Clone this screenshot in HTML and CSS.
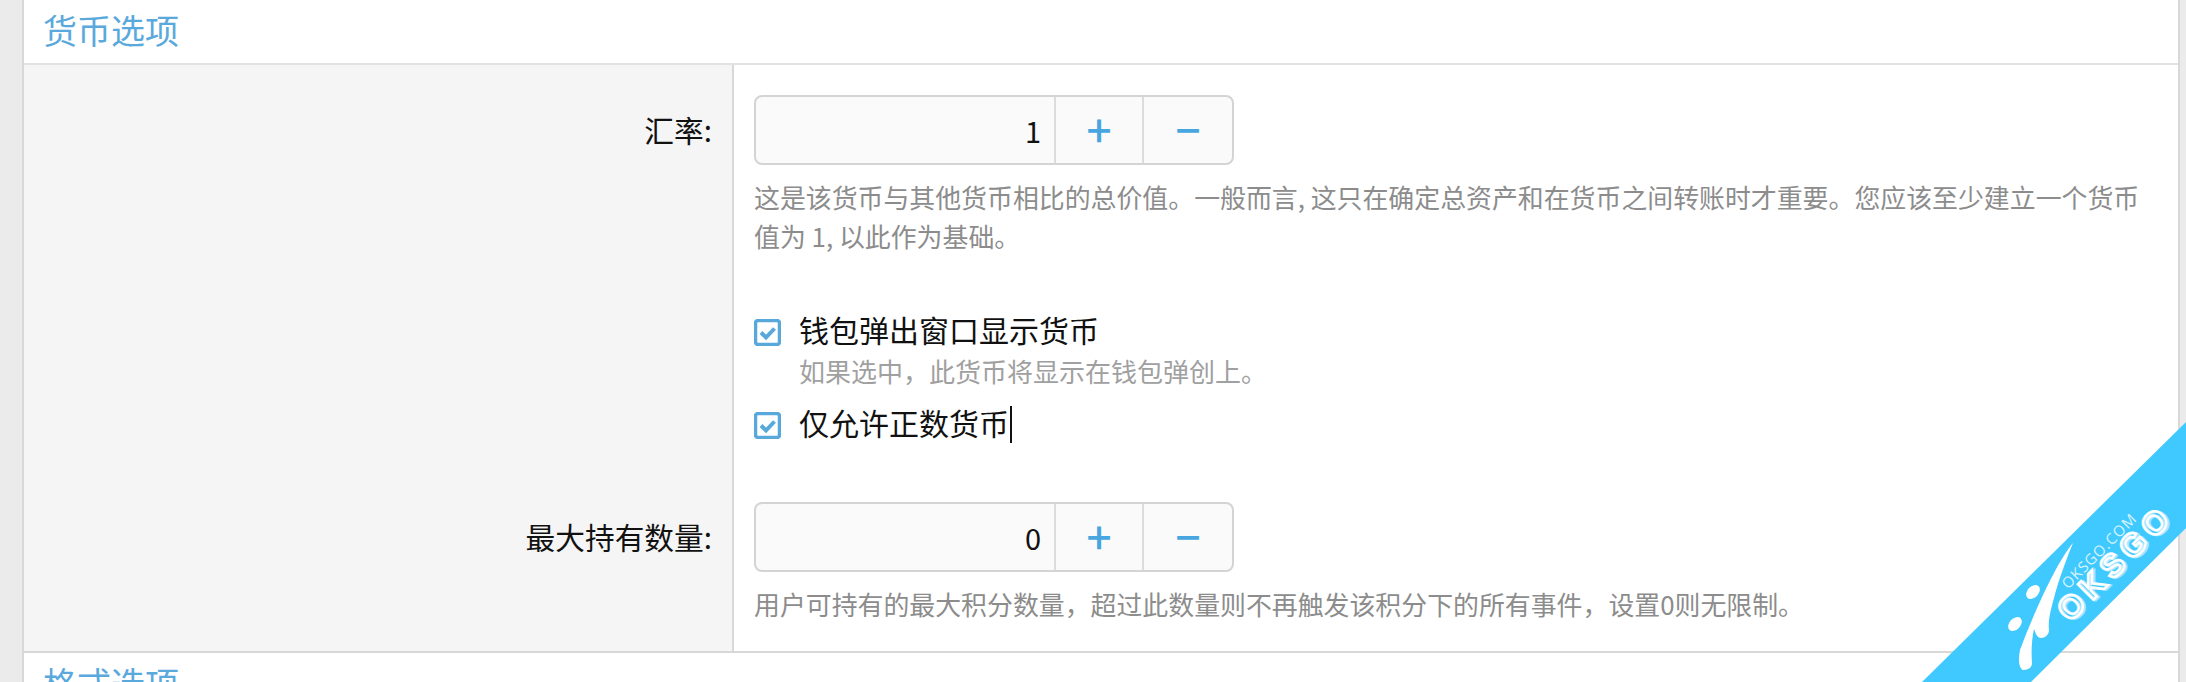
FILE: index.html
```html
<!DOCTYPE html>
<html lang="zh-CN">

<head>
    <meta charset="UTF-8">
    <title>货币选项</title>
    <link rel="stylesheet" href="styles.css">
</head>

<body>

    <div class="container">
        <h2 class="section-title">货币选项</h2>

        <div class="field">
            <label class="field-label" for="rate">汇率:</label>
            <div class="field-body">
                <div class="spinner">
                    <input id="rate" type="text" value="1">
                    <button type="button" class="plus">+</button>
                    <button type="button" class="minus">−</button>
                </div>
                <p class="help">这是该货币与其他货币相比的总价值。一般而言, 这只在确定总资产和在货币之间转账时才重要。您应该至少建立一个货币值为 1, 以此作为基础。</p>
            </div>
        </div>

        <div class="field">
            <div class="field-label"></div>
            <div class="field-body checks">
                <div class="check">
                    <svg class="check-box" viewBox="0 0 27 27">
                        <rect x="1.500" y="1.500" width="24" height="24" rx="2.500" fill="#fff" stroke="#58a8dc" stroke-width="3.500" />
                        <path d="M7 13.500l5 5 8.500-9" fill="none" stroke="#58a8dc" stroke-width="4" />
                    </svg>
                    <div>
                        <div class="check-text">钱包弹出窗口显示货币</div>
                        <div class="check-help">如果选中，此货币将显示在钱包弹创上。</div>
                    </div>
                </div>
                <div class="check">
                    <svg class="check-box" viewBox="0 0 27 27">
                        <rect x="1.500" y="1.500" width="24" height="24" rx="2.500" fill="#fff" stroke="#58a8dc" stroke-width="3.500" />
                        <path d="M7 13.500l5 5 8.500-9" fill="none" stroke="#58a8dc" stroke-width="4" />
                    </svg>
                    <div class="check-text">仅允许正数货币<span class="caret"></span></div>
                </div>
            </div>
        </div>

        <div class="field field-last">
            <label class="field-label" for="max">最大持有数量:</label>
            <div class="field-body field-body-last">
                <div class="spinner">
                    <input id="max" type="text" value="0">
                    <button type="button" class="plus">+</button>
                    <button type="button" class="minus">−</button>
                </div>
                <p class="help">用户可持有的最大积分数量，超过此数量则不再触发该积分下的所有事件，设置0则无限制。</p>
            </div>
        </div>

        <h2 class="section-title">格式选项</h2>
    </div>

    <!-- ribbon in the corner -->
    <svg class="ribbon" viewBox="0 0 264 260">
        <polygon points="264,0 264,106 109,260 0,260" fill="#3fc9ff" />
        <g fill="#fff">
            <path d="M151 121C136 138 112 190 98 228C96 238 97 246 101 248C107 248 110 245 110 241C109 228 110 216 112 207C114 213 116 216 119 216C124 216 127 212 127 208C126 200 128 190 132 176C136 160 144 138 151 121Z" />
            <ellipse cx="111" cy="170" rx="8" ry="5.500" transform="rotate(-45 111 170)" />
            <ellipse cx="93" cy="202" rx="8" ry="5.500" transform="rotate(-45 93 202)" />
        </g>
        <g transform="translate(148 201) rotate(-45)">
            <text class="ribbon-big ribbon-shadow" x="1" y="2">OKSGO</text>
            <text class="ribbon-big" x="0" y="0">OKSGO</text>
            <text class="ribbon-small" x="22" y="-25">OKSGO.COM</text>
        </g>
    </svg>

</body>

</html>
```
FILE: styles.css
```css
* {
    box-sizing: border-box;
}

html,
body {
    height: 100%;
}

body {
    margin: 0;
    overflow: hidden;
    background-color: #ebebeb;
    font-family: "Noto Sans CJK SC", "Liberation Sans", sans-serif;
    color: #111;
}

input,
button {
    font-family: inherit;
}

p {
    margin: 0;
}

.container {
    margin-inline: 22px 6px;
    background-color: white;
    border-inline: 2px solid #d8d8d8;
}

.section-title {
    height: 65px;
    margin: 0;
    padding-inline-start: 19px;
    border-bottom: 2px solid #e2e2e2;
    font-size: 34px;
    font-weight: 400;
    line-height: 60px;
    color: #5aa9dc;
}

.field {
    display: grid;
    grid-template-columns: 710px 1fr;
}

.field-last {
    border-bottom: 2px solid #d8d8d8;
}

.field-label {
    background-color: #f5f5f5;
    border-right: 2px solid #d8d8d8;
    padding: 42px 20px 0 0;
    font-size: 29.700px;
    line-height: 46px;
    text-align: right;
}

.field-body {
    padding: 30px 34px 0 20px;
}

.field-body-last {
    padding-bottom: 28px;
}

.spinner {
    display: flex;
    width: 480px;
    height: 70px;
    border: 2px solid #d4d4d4;
    border-radius: 8px;
    background-color: #fafafa;
    overflow: hidden;
}

.spinner input {
    flex: 1;
    min-width: 0;
    border: 0;
    padding: 0 13px;
    background: none;
    color: #111;
    font-size: 29px;
    text-align: right;
    outline: none;
}

.spinner button {
    width: 88px;
    border: 0;
    border-left: 2px solid #dcdcdc;
    background: none;
    padding: 0 0 4px;
    color: #47a5e0;
    font-size: 44px;
    font-weight: 500;
    line-height: 1;
}

.spinner .minus {
    width: 90px;
}

.help {
    margin-top: 12px;
    font-size: 25.900px;
    line-height: 39px;
    color: #8c8c8c;
}

.checks {
    padding-top: 51px;
    padding-bottom: 27px;
}

.check {
    display: flex;
    gap: 18px;
}

.check + .check {
    margin-top: 13px;
}

.check-box {
    flex: none;
    width: 27px;
    height: 27px;
    margin-top: 13px;
}

.check-text {
    font-size: 30px;
    line-height: 46px;
}

.check-help {
    margin-top: 4px;
    font-size: 26px;
    line-height: 30px;
    color: #a0a0a0;
}

.caret {
    display: inline-block;
    width: 2px;
    height: 37px;
    margin-left: 1px;
    vertical-align: -8px;
    background-color: #111;
}

/* sits over the page corner */
.ribbon {
    position: absolute;
    right: 0;
    bottom: 0;
    width: 264px;
    height: 260px;
}

.ribbon-big {
    font-family: "Liberation Sans", sans-serif;
    font-size: 32px;
    font-weight: 700;
    letter-spacing: 6px;
    fill: none;
    stroke: #fff;
    stroke-width: 2.500;
}

.ribbon-shadow {
    stroke: #a6e6ff;
}

.ribbon-small {
    font-family: "Open Sans", sans-serif;
    font-size: 15px;
    letter-spacing: 1px;
    fill: #d8f3ff;
}
```
